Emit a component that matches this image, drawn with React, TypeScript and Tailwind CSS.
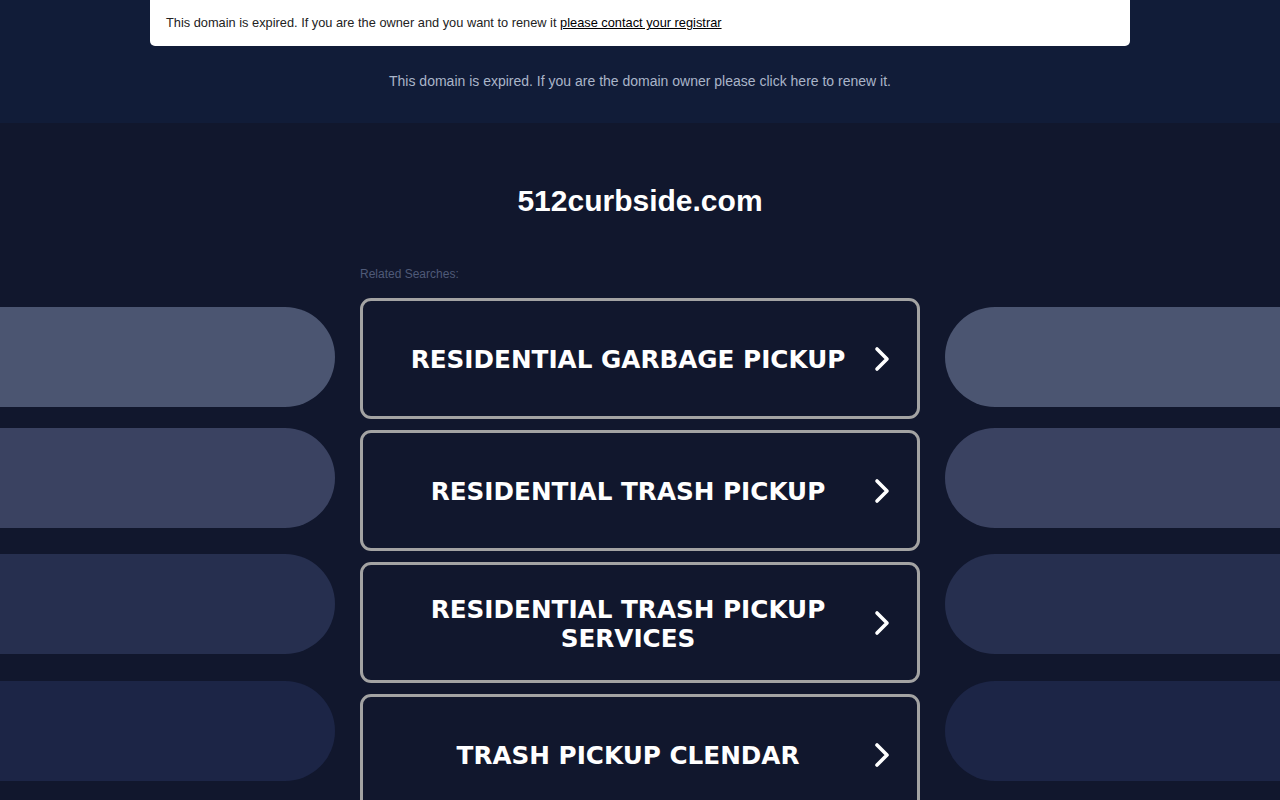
import React from 'react'

// Parked / expired domain landing page
const SEARCHES = [
  'RESIDENTIAL GARBAGE PICKUP',
  'RESIDENTIAL TRASH PICKUP',
  'RESIDENTIAL TRASH PICKUP SERVICES',
  'TRASH PICKUP CLENDAR',
]

const LEFT_PILLS = [
  'mt-[41px] bg-[#4b5571]',
  'mt-[21px] bg-[#3a4261]',
  'mt-[26px] bg-[#262f4f]',
  'mt-[27px] bg-[#1c2546]',
]

const RIGHT_PILLS = [
  'mt-[41px] bg-[#4b5571]',
  'mt-[21px] bg-[#3a4261]',
  'mt-[26px] bg-[#262f4f]',
  'mt-[27px] bg-[#1c2546]',
]

function Chevron() {
  return (
    <svg width="18" height="26" viewBox="0 0 18 26" fill="none" aria-hidden="true" className="shrink-0">
      <polyline points="4,3 14,13 4,23" stroke="white" strokeWidth="3.6" strokeLinecap="round" strokeLinejoin="round" />
    </svg>
  )
}

function SearchLink({label}: {label: string}) {
  return (
    <a
      href="#"
      className="flex h-[121px] items-center rounded-[11px] border-[3px] border-[#a3a3a3] bg-[#11172d] pl-[36px] pr-[26px] text-white"
    >
      <span
        className="flex-1 pr-[16px] pt-[2px] text-center text-[24.7px] font-bold leading-[29px]"
        style={{fontFamily: '"DejaVu Sans", Verdana, sans-serif'}}
      >
        {label}
      </span>
      <Chevron />
    </a>
  )
}

export default function App() {
  return (
    <div className="min-h-[800px] bg-[#11172d]" style={{fontFamily: '"Liberation Sans", Arial, sans-serif'}}>
      <header className="h-[123px] bg-[#111c38]">
        <div className="mx-auto flex h-[46px] w-[980px] items-center rounded-b-[5px] bg-white px-4 text-[12.8px] text-[#222]">
          <span>
            This domain is expired. If you are the owner and you want to renew it{' '}
            <a href="#" className="text-black underline">please contact your registrar</a>
          </span>
        </div>
        <p className="mt-[26px] text-center text-[14px] leading-[18px] text-[#aab5c9]">
          This domain is expired. If you are the domain owner please click here to renew it.
        </p>
      </header>

      <main className="overflow-hidden">
        <h1 className="pt-[61px] text-center text-[30px] font-bold leading-[33px] text-white">512curbside.com</h1>

        <div className="mt-[49px] flex gap-[25px]">
          <div className="flex w-[335px] shrink-0 flex-col">
            {LEFT_PILLS.map((cls) => (
              <div key={cls} className={'h-[100px] rounded-r-full ' + cls} />
            ))}
          </div>

          <div className="w-[560px] shrink-0">
            <div className="text-[12px] leading-[16px] text-[#4f5a78]">Related Searches:</div>
            <div className="mt-[16px] flex flex-col gap-[11px]">
              {SEARCHES.map((s) => (
                <SearchLink key={s} label={s} />
              ))}
            </div>
          </div>

          <div className="flex w-[335px] shrink-0 flex-col">
            {RIGHT_PILLS.map((cls) => (
              <div key={cls} className={'h-[100px] rounded-l-full ' + cls} />
            ))}
          </div>
        </div>
      </main>
    </div>
  )
}
